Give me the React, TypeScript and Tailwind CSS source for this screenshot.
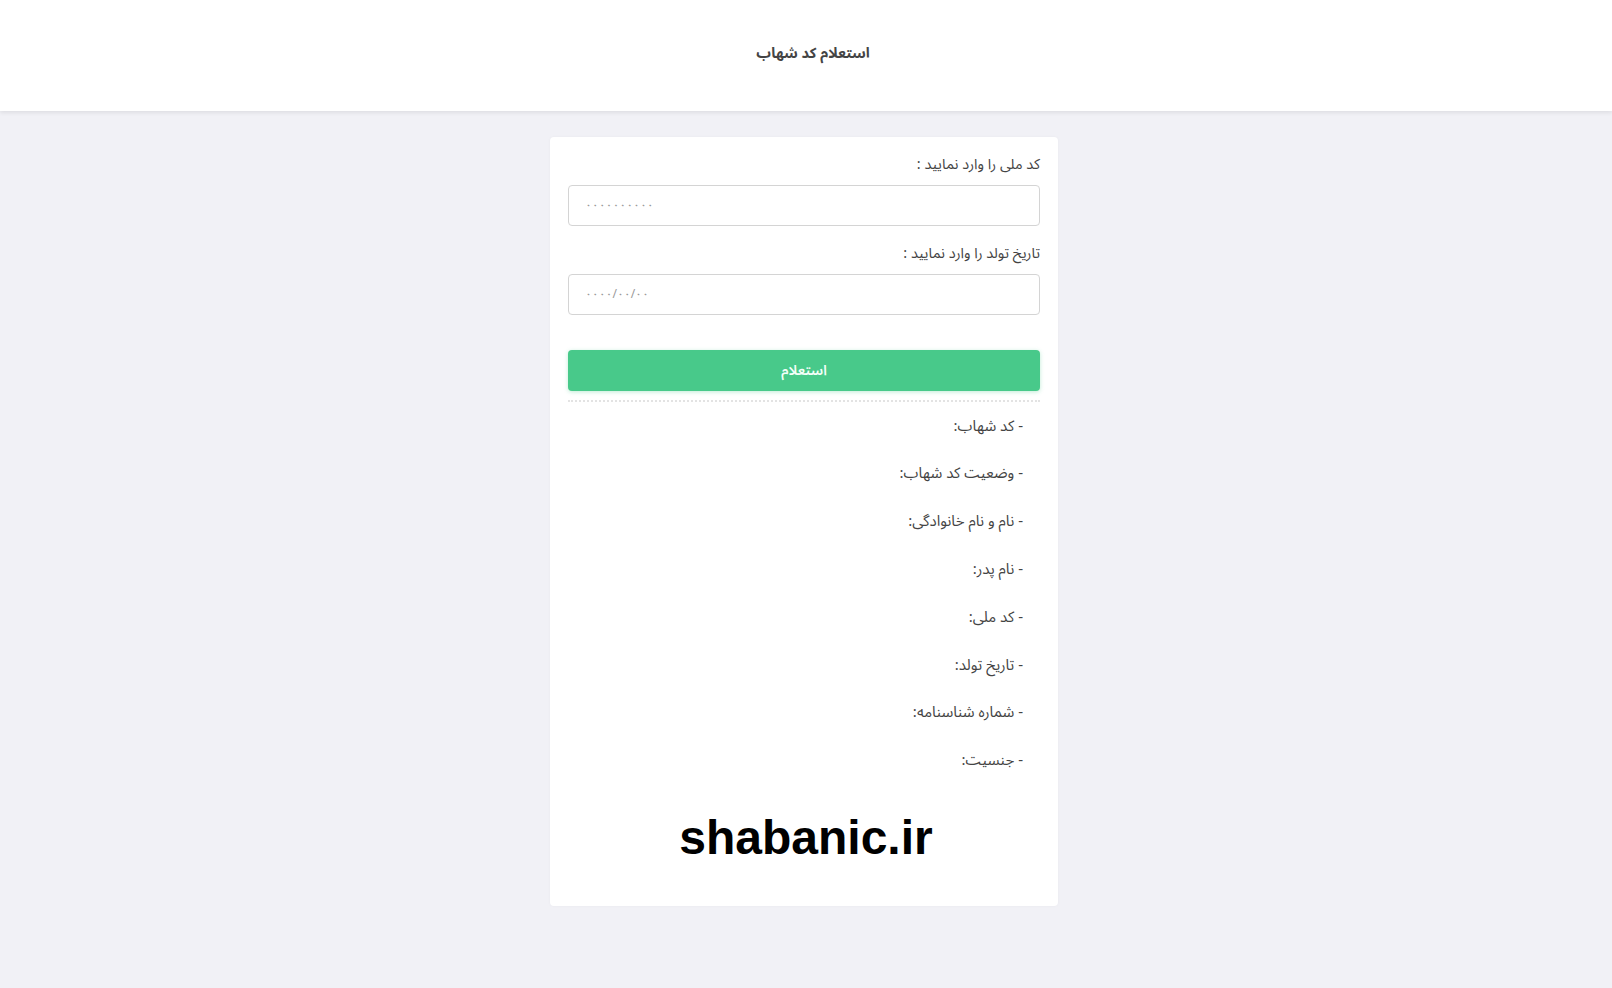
import React from "react";

const items = [
  "- کد شهاب:",
  "- وضعیت کد شهاب:",
  "- نام و نام خانوادگی:",
  "- نام پدر:",
  "- کد ملی:",
  "- تاریخ تولد:",
  "- شماره شناسنامه:",
  "- جنسیت:",
];

export default function App() {
  return (
    <div
      dir="rtl"
      className="min-h-[988px] bg-[#f1f1f6] text-[#444]"
      style={{ fontFamily: '"Noto Sans Arabic", "DejaVu Sans", sans-serif' }}
    >
      <header className="h-[111px] bg-white flex items-center justify-center shadow-[0_2px_4px_rgba(0,0,0,0.08)] pb-1 pl-[14px]">
        <h1 className="text-[14.5px] font-bold text-[#444]">استعلام کد شهاب</h1>
      </header>

      <div className="flex justify-center pr-[4px]">
        <div className="w-[508px] mt-[26px] bg-white rounded-[4px] shadow-[0_0_3px_rgba(0,0,0,0.04)] px-[18px] pt-[18px] pb-[44px]">
          <label className="block text-[14.5px] leading-[20px] text-[#444]">کد ملی را وارد نمایید :</label>
          <input
            dir="ltr"
            placeholder="۰۰۰۰۰۰۰۰۰۰"
            className="mt-[10px] block w-full h-[41px] rounded-[4px] border border-[#d4d4d4] px-[16px] text-[12px] text-left placeholder:text-[#999] outline-none"
          />
          <label className="block mt-[18px] text-[14.5px] leading-[20px] text-[#444]">تاریخ تولد را وارد نمایید :</label>
          <input
            dir="ltr"
            placeholder="۰۰۰۰/۰۰/۰۰"
            className="mt-[10px] block w-full h-[41px] rounded-[4px] border border-[#d4d4d4] px-[16px] text-[12px] text-left placeholder:text-[#999] outline-none"
          />
          <button className="mt-[35px] block w-full h-[41px] rounded-[4px] bg-[#48c98a] text-[#f4fff9] text-[14px] font-semibold shadow-[0_1px_4px_rgba(72,201,138,0.35)]">
            استعلام
          </button>
          <div className="mt-[9px] border-t-2 border-dotted border-[#e3e3e3]" />
          <ul className="pr-[17px]">
            {items.map((t) => (
              <li key={t} className="h-[47.8px] flex items-center text-[15px] text-[#444]">
                {t}
              </li>
            ))}
          </ul>
          <div
            dir="ltr"
            className="mt-[30px] pl-[4px] text-center text-[48px] leading-[48px] font-bold text-black"
            style={{ fontFamily: '"Liberation Sans", Arial, sans-serif' }}
          >
            shabanic.ir
          </div>
        </div>
      </div>
    </div>
  );
}
